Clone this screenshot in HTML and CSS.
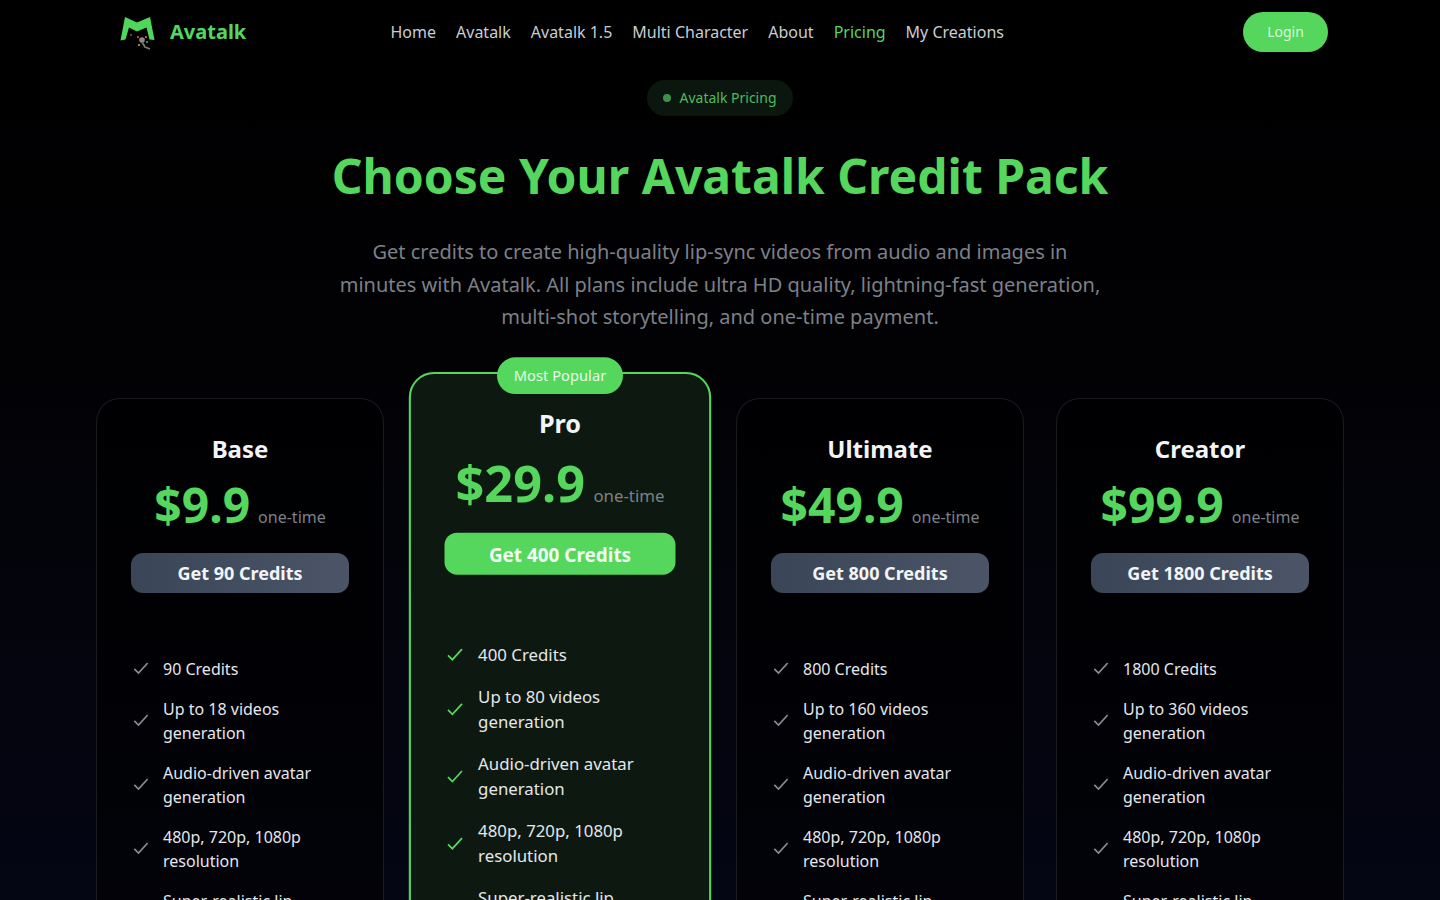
FILE: index.html
```html
<!DOCTYPE html>
<html lang="en">
<head>
<meta charset="utf-8">
<title>Avatalk Pricing</title>
<link rel="stylesheet" href="styles.css">
</head>
<body>
<div class="page">
<header class="header">
  <a class="brand" href="#">
    <svg class="logo" width="36" height="36" viewBox="0 0 36 36" aria-hidden="true">
      <path d="M5 2 L17 7.5 L30 2 L34.5 25 L29.5 24.5 L26.5 12.5 L17 16.5 L9 12.5 L5.5 24.5 L.5 25.5 Z" fill="#4fd65c"/>
      <circle cx="11" cy="20" r=".9" fill="#e33"/>
      <circle cx="18" cy="22" r="1" fill="#e8613a"/>
      <circle cx="26" cy="22" r=".9" fill="#d9b23a"/>
      <circle cx="22" cy="25" r="2.8" fill="#8a8a8a"/>
      <path d="M22 27 L25 32 L30 34" fill="none" stroke="#777" stroke-width="1.8"/>
      <circle cx="19" cy="30" r="1" fill="#d9b23a"/>
      <circle cx="27" cy="27" r=".9" fill="#4fd65c"/>
    </svg>
    <span class="brand-name">Avatalk</span>
  </a>
  <nav class="nav">
    <a href="#">Home</a>
    <a href="#">Avatalk</a>
    <a href="#">Avatalk 1.5</a>
    <a href="#">Multi Character</a>
    <a href="#">About</a>
    <a href="#" class="active">Pricing</a>
    <a href="#">My Creations</a>
  </nav>
  <a class="login" href="#">Login</a>
</header>
<main>
  <section class="hero">
    <div class="pill"><span class="pill-dot"></span>Avatalk Pricing</div>
    <h1>Choose Your Avatalk Credit Pack</h1>
    <p>Get credits to create high-quality lip-sync videos from audio and images in minutes with Avatalk. All plans include ultra HD quality, lightning-fast generation, multi-shot storytelling, and one-time payment.</p>
  </section>
  <section class="plans">
    <article class="card">
      <h2>Base</h2>
      <div class="price"><strong>$9.9</strong><span>one-time</span></div>
      <a class="cta" href="#">Get 90 Credits</a>
      <ul class="features">
        <li><svg viewBox="0 0 24 24"><path d="M4 13l5 5L20 6"/></svg><span>90 Credits</span></li>
        <li><svg viewBox="0 0 24 24"><path d="M4 13l5 5L20 6"/></svg><span>Up to 18 videos generation</span></li>
        <li><svg viewBox="0 0 24 24"><path d="M4 13l5 5L20 6"/></svg><span>Audio-driven avatar generation</span></li>
        <li><svg viewBox="0 0 24 24"><path d="M4 13l5 5L20 6"/></svg><span>480p, 720p, 1080p resolution</span></li>
        <li><svg viewBox="0 0 24 24"><path d="M4 13l5 5L20 6"/></svg><span>Super-realistic lip synchronization</span></li>
      </ul>
    </article>
    <article class="card featured">
      <div class="popular">Most Popular</div>
      <h2>Pro</h2>
      <div class="price"><strong>$29.9</strong><span>one-time</span></div>
      <a class="cta" href="#">Get 400 Credits</a>
      <ul class="features">
        <li><svg viewBox="0 0 24 24"><path d="M4 13l5 5L20 6"/></svg><span>400 Credits</span></li>
        <li><svg viewBox="0 0 24 24"><path d="M4 13l5 5L20 6"/></svg><span>Up to 80 videos generation</span></li>
        <li><svg viewBox="0 0 24 24"><path d="M4 13l5 5L20 6"/></svg><span>Audio-driven avatar generation</span></li>
        <li><svg viewBox="0 0 24 24"><path d="M4 13l5 5L20 6"/></svg><span>480p, 720p, 1080p resolution</span></li>
        <li><svg viewBox="0 0 24 24"><path d="M4 13l5 5L20 6"/></svg><span>Super-realistic lip synchronization</span></li>
      </ul>
    </article>
    <article class="card">
      <h2>Ultimate</h2>
      <div class="price"><strong>$49.9</strong><span>one-time</span></div>
      <a class="cta" href="#">Get 800 Credits</a>
      <ul class="features">
        <li><svg viewBox="0 0 24 24"><path d="M4 13l5 5L20 6"/></svg><span>800 Credits</span></li>
        <li><svg viewBox="0 0 24 24"><path d="M4 13l5 5L20 6"/></svg><span>Up to 160 videos generation</span></li>
        <li><svg viewBox="0 0 24 24"><path d="M4 13l5 5L20 6"/></svg><span>Audio-driven avatar generation</span></li>
        <li><svg viewBox="0 0 24 24"><path d="M4 13l5 5L20 6"/></svg><span>480p, 720p, 1080p resolution</span></li>
        <li><svg viewBox="0 0 24 24"><path d="M4 13l5 5L20 6"/></svg><span>Super-realistic lip synchronization</span></li>
      </ul>
    </article>
    <article class="card">
      <h2>Creator</h2>
      <div class="price"><strong>$99.9</strong><span>one-time</span></div>
      <a class="cta" href="#">Get 1800 Credits</a>
      <ul class="features">
        <li><svg viewBox="0 0 24 24"><path d="M4 13l5 5L20 6"/></svg><span>1800 Credits</span></li>
        <li><svg viewBox="0 0 24 24"><path d="M4 13l5 5L20 6"/></svg><span>Up to 360 videos generation</span></li>
        <li><svg viewBox="0 0 24 24"><path d="M4 13l5 5L20 6"/></svg><span>Audio-driven avatar generation</span></li>
        <li><svg viewBox="0 0 24 24"><path d="M4 13l5 5L20 6"/></svg><span>480p, 720p, 1080p resolution</span></li>
        <li><svg viewBox="0 0 24 24"><path d="M4 13l5 5L20 6"/></svg><span>Super-realistic lip synchronization</span></li>
      </ul>
    </article>
  </section>
</main>
</div>
</body>
</html>
```
FILE: styles.css
```css
* { box-sizing: border-box; }
html, body { margin: 0; padding: 0; background: #000; }
body { font-family: "Noto Sans", sans-serif; color: #fff; }
a { text-decoration: none; color: inherit; }

.page {
  height: 900px;
  overflow: hidden;
  background: linear-gradient(180deg, #000 0%, #020205 40%, #050614 100%);
}

.header {
  height: 64px;
  display: flex;
  align-items: center;
  padding: 0 112px 0 120px;
}
.brand { display: flex; align-items: center; gap: 14px; width: 270.5px; }
.logo { display: block; margin-top: 1px; }
.brand-name { font-size: 20px; line-height: 26px; font-weight: 700; color: #55d65d; margin-top: -1px; }
.nav { display: flex; gap: 20px; font-size: 16px; color: #c9cdd3; }
.nav .active { color: #55d65d; }
.login {
  margin-left: auto;
  width: 85px;
  height: 40px;
  padding-bottom: 2px;
  border-radius: 20px;
  background: #55d65d;
  display: flex;
  align-items: center;
  justify-content: center;
  font-size: 14px;
  color: #d9f7dc;
}

.hero { display: flex; flex-direction: column; align-items: center; padding-top: 16px; }
.pill {
  height: 36px;
  padding: 0 16px;
  border-radius: 18px;
  background: #0b170e;
  display: flex;
  align-items: center;
  gap: 8px;
  font-size: 14px;
  line-height: 20px;
  color: #52b95e;
}
.pill-dot { width: 8px; height: 8px; border-radius: 50%; background: #3f9049; }
.hero h1 {
  margin: 28px 0 0;
  font-size: 48px;
  line-height: 64px;
  font-weight: 700;
  color: #55d65d;
}
.hero p {
  margin: 28px 0 0;
  width: 768px;
  text-align: center;
  font-size: 20px;
  line-height: 32.5px;
  color: #7d8087;
}

.plans {
  display: grid;
  grid-template-columns: repeat(4, 288px);
  gap: 32px;
  justify-content: center;
  margin-top: 64px;
}
.card {
  height: 1040px;
  padding: 32px 34px;
  border: 1px solid rgba(255, 255, 255, 0.1);
  border-radius: 24px;
  background: rgba(0, 0, 0, 0.6);
  position: relative;
}
.card h2 {
  margin: 0;
  text-align: center;
  font-size: 24px;
  line-height: 36px;
  font-weight: 700;
  color: #f3f4f6;
}
.price {
  margin-top: 8px;
  display: flex;
  align-items: baseline;
  justify-content: center;
  gap: 8px;
}
.price strong { font-size: 48px; line-height: 60px; font-weight: 700; color: #55d65d; }
.price span { font-size: 16px; color: #7d8087; }
.cta {
  margin-top: 18px;
  height: 40px;
  border-radius: 12px;
  display: flex;
  align-items: center;
  justify-content: center;
  font-size: 18px;
  font-weight: 700;
  color: #f3f4f6;
  background: linear-gradient(90deg, #3a4558, #4b5567);
}
.features {
  list-style: none;
  margin: 64px 0 0;
  padding: 0;
  display: flex;
  flex-direction: column;
  gap: 16px;
  font-size: 16px;
  line-height: 24px;
  color: #e5e7eb;
}
.features li { display: flex; align-items: center; gap: 12px; }
.features svg {
  width: 20px;
  height: 20px;
  flex: none;
  margin-top: -1px;
  fill: none;
  stroke: #8a8d93;
  stroke-width: 2;
}

.featured {
  transform: scale(1.05);
  padding: 29px 32px;
  border: 2px solid #55d65d;
  background: #0d1910;
}
.featured .price { margin-top: 9px; }
.featured .cta { background: #55d65d; color: #f0fff1; margin-top: 17px; padding-top: 1px; }
.featured .features { margin-top: 64.4px; }
.featured .features svg { stroke: #55d65d; margin-top: 0; }
.popular {
  position: absolute;
  top: -16px;
  left: 50%;
  transform: translateX(-50%);
  width: 120px;
  height: 35px;
  border-radius: 18px;
  background: #55d65d;
  display: flex;
  align-items: center;
  justify-content: center;
  font-size: 14px;
  color: #e6fbe8;
  white-space: nowrap;
}
```
